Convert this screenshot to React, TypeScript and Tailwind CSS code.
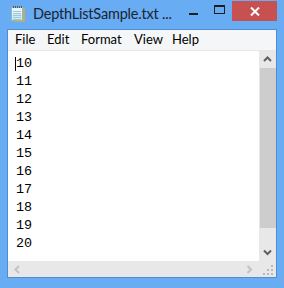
import React from 'react';

const lines = ['10', '11', '12', '13', '14', '15', '16', '17', '18', '19', '20'];
const menus = [
  { label: 'File', w: 'w-[32px]' },
  { label: 'Edit', w: 'w-[34px]' },
  { label: 'Format', w: 'w-[53px]' },
  { label: 'View', w: 'w-[38px]' },
  { label: 'Help', w: 'w-[40px]' },
];

function NotepadIcon() {
  return (
    <svg width="16" height="18" viewBox="0 0 16 18">
      <rect x="4" y="3" width="11" height="14" fill="#c8a868" />
      <rect x="1.5" y="2.5" width="11" height="13" fill="#cdebf3" stroke="#8fb8c6" />
      <rect x="2" y="3" width="10" height="6" fill="#e6f6fa" />
      {[6, 8, 10, 12, 14].map(y => (
        <line key={y} x1="3" x2="11" y1={y + 0.5} y2={y + 0.5} stroke="#9fc9d6" />
      ))}
      {[3, 5, 7, 9, 11].map(x => (
        <rect key={x} x={x} y="1" width="1" height="2" fill="#4a5a66" />
      ))}
    </svg>
  );
}

function Chevron({ dir, color }: { dir: 'up' | 'down' | 'left' | 'right'; color: string }) {
  const pts = {
    up: '1,6 4.5,2.5 8,6',
    down: '1,2.5 4.5,6 8,2.5',
    left: '6,1 2.5,4.5 6,8',
    right: '2.5,1 6,4.5 2.5,8',
  }[dir];
  return (
    <svg width="9" height="9" viewBox="0 0 9 9">
      <polyline points={pts} fill="none" stroke={color} strokeWidth="2" />
    </svg>
  );
}

export default function App() {
  return (
    <div className="w-[284px] h-[288px] bg-[#68acf4] flex flex-col" style={{ fontFamily: 'Lato, "Noto Sans", sans-serif' }}>
      {/* title bar */}
      <div className="h-[29px] flex items-start">
        <div className="ml-[10px] mt-[5px] shrink-0">
          <NotepadIcon />
        </div>
        <span className="ml-[7px] mt-[4px] text-[14.5px] leading-[20px] text-[#1c2430] whitespace-nowrap tracking-[-0.2px]">
          DepthListSample.txt ...
        </span>
        <div className="flex-1" />
        <div className="w-[26px] h-[20px] mt-[1px] shrink-0 flex items-center justify-center">
          <div className="w-[9px] h-[2px] bg-[#1e1e1e] mt-[6px]" />
        </div>
        <div className="w-[26px] h-[20px] mt-[1px] shrink-0 flex items-center justify-center">
          <div className="w-[11px] h-[9px] border border-t-2 border-[#1e1e1e] -mt-[4px]" />
        </div>
        <div className="w-[45px] h-[20px] mt-[1px] mr-[7px] shrink-0 bg-[#c75050] flex items-center justify-center">
          <svg width="10" height="9" viewBox="0 0 10 9">
            <path d="M1 0.5 L9 8.5 M9 0.5 L1 8.5" stroke="#fff" strokeWidth="2" />
          </svg>
        </div>
      </div>
      {/* client */}
      <div className="mx-[7px] mb-[10px] flex-1 border border-[#4f8ed4] flex flex-col bg-white">
        <div className="h-[21px] bg-[#f5f6f7] border-b border-[#e3e6ea] flex items-center text-[13px] text-black">
          {menus.map(m => (
            <span key={m.label} className={`${m.w} pl-[7px] whitespace-nowrap`}>
              {m.label}
            </span>
          ))}
        </div>
        <div className="flex-1 grid grid-cols-[1fr_17px] grid-rows-[1fr_16px]">
          <div className="pt-[4px] pl-[8px] text-[13.4px] leading-[18px] text-black" style={{ fontFamily: '"Liberation Mono", monospace' }}>
            {lines.map((l, i) => (
              <div key={l} className="flex items-center">
                {i === 0 && <span className="w-px h-[14px] bg-black -ml-px" />}
                <span>{l}</span>
              </div>
            ))}
          </div>
          <div className="bg-[#e8e8e8] flex flex-col">
            <div className="h-[17px] flex items-center justify-center">
              <Chevron dir="up" color="#606060" />
            </div>
            <div className="flex-1 pl-px">
              <div className="h-[160px] bg-[#cdcdcd]" />
            </div>
            <div className="h-[17px] flex items-center justify-center">
              <Chevron dir="down" color="#606060" />
            </div>
          </div>
          <div className="bg-[#e8e8e8] flex items-center justify-between px-[5px]">
            <Chevron dir="left" color="#c2c2c2" />
            <Chevron dir="right" color="#c2c2c2" />
          </div>
          <div className="bg-[#e8e8e8] relative">
            <svg width="17" height="16" viewBox="0 0 17 16" className="absolute inset-0">
              {[
                [12, 6],
                [8, 10],
                [12, 10],
                [4, 14],
                [8, 14],
                [12, 14],
              ].map(([x, y]) => (
                <rect key={`${x}-${y}`} x={x} y={y - 2} width="2" height="2" fill="#b9b9b9" />
              ))}
            </svg>
          </div>
        </div>
      </div>
    </div>
  );
}
